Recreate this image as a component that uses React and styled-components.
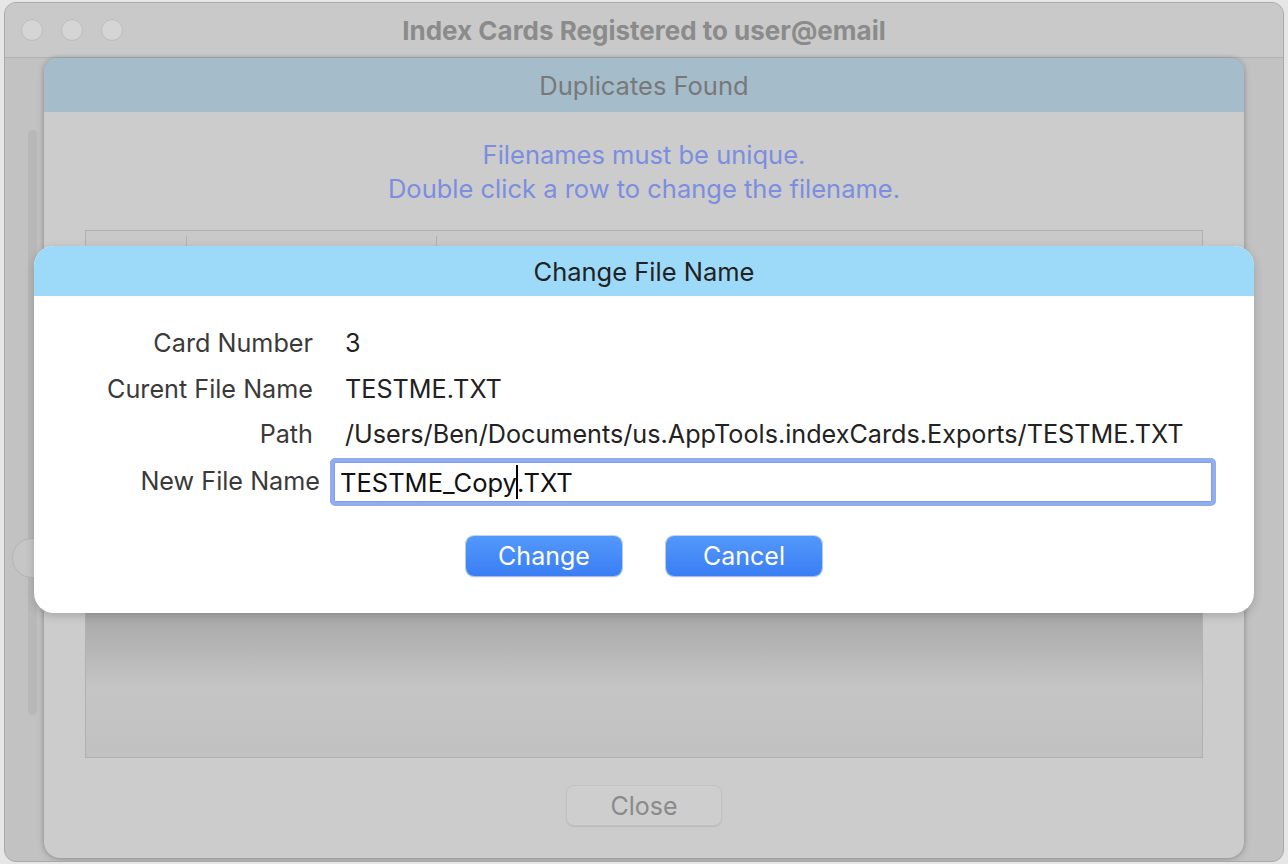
import React from "react";
import styled, { createGlobalStyle } from "styled-components";

const GlobalStyle = createGlobalStyle`
  html, body {
    margin: 0;
    padding: 0;
    background: #e6e6e6;
  }
  body {
    font-family: "Inter", "Liberation Sans", Arial, sans-serif;
    -webkit-font-smoothing: antialiased;
  }
  * {
    box-sizing: border-box;
  }
`;

const Page = styled.div`
  position: relative;
  width: 1288px;
  height: 864px;
  padding: 2px 4px;
  overflow: hidden;
`;

const Window = styled.div`
  width: 1280px;
  height: 860px;
  border: 1px solid #a9a9a9;
  border-radius: 12px;
  background: #c2c2c2;
  display: flex;
  flex-direction: column;
  overflow: hidden;
`;

const TitleBar = styled.div`
  height: 55px;
  flex: none;
  display: grid;
  grid-template-columns: 1fr auto 1fr;
  align-items: center;
  background: #c9c9c9;
  border-bottom: 1px solid #b1b1b1;
`;

const Lights = styled.div`
  display: flex;
  gap: 18px;
  padding-left: 16px;
`;

const Light = styled.span`
  width: 22px;
  height: 22px;
  border-radius: 50%;
  background: #d5d5d5;
  border: 1px solid #bcbcbc;
`;

const WindowTitle = styled.div`
  font-size: 26px;
  font-weight: 700;
  color: #8b8b8b;
`;

const WindowBody = styled.div`
  flex: 1;
  display: flex;
`;

const Gutter = styled.div`
  position: relative;
  width: 39px;
  flex: none;
  display: flex;
  flex-direction: column;
`;

const ScrollStrip = styled.div`
  margin: 72px 0 0 23px;
  width: 9px;
  height: 585px;
  border-radius: 5px;
  background: #b8b8b8;
`;

const Knob = styled.div`
  position: absolute;
  left: 7px;
  top: 480px;
  width: 40px;
  height: 40px;
  border-radius: 50%;
  background: #c6c6c6;
  border: 1px solid #b4b4b4;
`;

const Sheet = styled.div`
  width: 1200px;
  height: 800px;
  flex: none;
  display: flex;
  flex-direction: column;
  background: #cccccc;
  border-radius: 14px 14px 16px 16px;
  box-shadow: 0 0 4px rgba(0, 0, 0, 0.22), 0 2px 8px rgba(0, 0, 0, 0.12);
  overflow: hidden;
`;

const SheetHeader = styled.div`
  height: 54px;
  flex: none;
  display: flex;
  align-items: center;
  justify-content: center;
  background: #a5bccb;
  color: #787878;
  font-size: 25.5px;
`;

const Message = styled.div`
  padding-top: 26px;
  text-align: center;
  color: #7b8ee0;
  font-size: 25.5px;
  line-height: 34px;
`;

const Table = styled.div`
  margin: 24px 41px 0;
  height: 528px;
  border: 1px solid #b0b0b0;
  background: linear-gradient(
    #a7a7a7 0%,
    #a7a7a7 72%,
    #c5c5c5 87%,
    #c1c1c1 100%
  );
`;

const TableHead = styled.div`
  height: 30px;
  display: grid;
  grid-template-columns: 100px 250px 1fr;
  background: #c9c9c9;
`;

const HeadCell = styled.div`
  margin-top: 5px;
  border-left: ${(p) => (p.$first ? "none" : "1px solid #b2b2b2")};
`;

const CloseButton = styled.button`
  margin: 27px auto 0;
  width: 156px;
  height: 41px;
  border-radius: 8px;
  border: 1px solid #c2c2c2;
  background: #cecece;
  box-shadow: 0 1px 1px rgba(0, 0, 0, 0.08);
  color: #8a8a8a;
  font-family: inherit;
  font-size: 25px;
`;

const Dialog = styled.div`
  position: absolute;
  left: 34px;
  top: 246px;
  width: 1220px;
  border-radius: 20px;
  background: #ffffff;
  overflow: hidden;
  box-shadow: 0 3px 10px rgba(0, 0, 0, 0.18);
`;

const DialogHeader = styled.div`
  height: 50px;
  display: flex;
  align-items: center;
  justify-content: center;
  background: #9ddaf9;
  color: #222;
  font-size: 25.5px;
`;

const Form = styled.div`
  display: grid;
  grid-template-columns: 286px 1fr;
  grid-template-rows: 46px 46px 44px 50px;
  column-gap: 10px;
  align-items: center;
  padding: 24px 38px 0 0;
  font-size: 25.2px;
`;

const Label = styled.div`
  text-align: right;
  color: #3a3a3a;
  padding-right: ${(p) => (p.$inset ? "7px" : "0")};
`;

const Value = styled.div`
  padding-left: 15px;
  color: #222;
  white-space: nowrap;
`;

const InputBox = styled.div`
  align-self: end;
  height: 48px;
  display: flex;
  align-items: center;
  padding-left: 6px;
  border: 4px solid #91acf1;
  border-radius: 5px;
  box-shadow: inset 0 0 0 1px #7f9ce9;
  background: #fff;
  color: #111;
  font-size: 25.5px;
  white-space: pre;
`;

const Caret = styled.span`
  display: inline-block;
  width: 2px;
  height: 34px;
  margin: 0 -1px;
  background: #000;
`;

const ButtonRow = styled.div`
  display: flex;
  justify-content: center;
  gap: 44px;
  padding: 30px 0 37px;
`;

const BlueButton = styled.button`
  width: 156px;
  height: 40px;
  border: none;
  border-radius: 8px;
  background: linear-gradient(#5398fa, #3a7ef5);
  box-shadow: 0 0 0 1px rgba(70, 130, 240, 0.35), 0 1px 2px rgba(0, 0, 0, 0.18);
  color: #fff;
  font-family: inherit;
  font-size: 25px;
`;

const App = () => {
  return (
    <>
      <GlobalStyle />
      <Page>
        <Window>
          <TitleBar>
            <Lights>
              <Light />
              <Light />
              <Light />
            </Lights>
            <WindowTitle>Index Cards Registered to user@email</WindowTitle>
            <div />
          </TitleBar>
          <WindowBody>
            <Gutter>
              <ScrollStrip />
              <Knob />
            </Gutter>
            <Sheet>
              <SheetHeader>Duplicates Found</SheetHeader>
              <Message>
                Filenames must be unique.
                <br />
                Double click a row to change the filename.
              </Message>
              <Table>
                <TableHead>
                  <HeadCell $first />
                  <HeadCell />
                  <HeadCell />
                </TableHead>
              </Table>
              <CloseButton>Close</CloseButton>
            </Sheet>
            <Gutter />
          </WindowBody>
        </Window>

        <Dialog>
          <DialogHeader>Change File Name</DialogHeader>
          <Form>
            <Label $inset>Card Number</Label>
            <Value>3</Value>
            <Label $inset>Curent File Name</Label>
            <Value>TESTME.TXT</Value>
            <Label $inset>Path</Label>
            <Value>/Users/Ben/Documents/us.AppTools.indexCards.Exports/TESTME.TXT</Value>
            <Label>New File Name</Label>
            <InputBox>
              TESTME_Copy<Caret />.TXT
            </InputBox>
          </Form>
          <ButtonRow>
            <BlueButton>Change</BlueButton>
            <BlueButton>Cancel</BlueButton>
          </ButtonRow>
        </Dialog>
      </Page>
    </>
  );
};

export default App;
